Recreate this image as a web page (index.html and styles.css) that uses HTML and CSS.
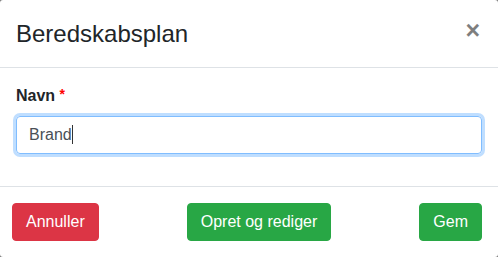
FILE: index.html
```html
<!DOCTYPE html>
<html lang="da">
<head>
    <meta charset="UTF-8">
    <meta name="viewport" content="width=device-width, initial-scale=1.0">
    <title>Beredskabsplan</title>
    <link rel="stylesheet" href="styles.css">
</head>
<body>
    <div class="modal-content">
        <div class="modal-header">
            <h4 class="modal-title">Beredskabsplan</h4>
            <button class="close" type="button">&times;</button>
        </div>

        <div class="modal-body">
            <div class="form-group">
                <label class="form-label">Navn <span class="required">*</span></label>
                <div class="form-control focused">Brand<span class="caret"></span></div>
            </div>
        </div>

        <div class="modal-footer">
            <button class="btn btn-danger">Annuller</button>
            <button class="btn btn-success">Opret og rediger</button>
            <button class="btn btn-success">Gem</button>
        </div>
    </div>
</body>
</html>
```

FILE: styles.css
```css
* {
    margin: 0;
    padding: 0;
    box-sizing: border-box;
}

html {
    background-color: #7a7a7a;
}

body {
    font-family: "Liberation Sans", Arial, sans-serif;
    color: #212529;
    width: 498px;
    height: 257px;
    overflow: hidden;
}

.modal-content {
    background-color: #fff;
    border-radius: 3px;
    height: 257px;
    display: flex;
    flex-direction: column;
}

.modal-header {
    display: flex;
    align-items: flex-start;
    padding: 16px;
    border-bottom: 1px solid #dee2e6;
}

.modal-title {
    font-size: 24px;
    font-weight: 500;
    line-height: 35px;
    flex: 1;
}

.close {
    background: none;
    border: none;
    font-family: "Liberation Sans", Arial, sans-serif;
    font-size: 25px;
    font-weight: 700;
    line-height: 1;
    color: #000;
    opacity: 0.5;
    margin-top: 2px;
    margin-right: 2px;
    cursor: pointer;
}

.modal-body {
    padding: 16px;
}

.form-group {
    margin-bottom: 16px;
}

.form-label {
    display: block;
    font-size: 16px;
    font-weight: 700;
    line-height: 24px;
    margin-bottom: 8px;
}

.required {
    color: #f00;
    font-size: 14px;
    line-height: 0;
    vertical-align: 2px;
}

.form-control {
    height: 38px;
    padding: 6px 12px;
    font-size: 16px;
    line-height: 24px;
    color: #495057;
    border: 1px solid #ced4da;
    border-radius: 4px;
}

.form-control.focused {
    border-color: #80bdff;
    box-shadow: 0 0 0 3px rgba(0, 123, 255, 0.25);
}

.caret {
    display: inline-block;
    width: 1px;
    height: 19px;
    background-color: #333;
    vertical-align: -4px;
}

.modal-footer {
    display: flex;
    justify-content: space-between;
    align-items: center;
    padding: 16px 16px 16px 12px;
    border-top: 1px solid #dee2e6;
}

.btn {
    font-family: "Liberation Sans", Arial, sans-serif;
    font-size: 16px;
    line-height: 24px;
    padding: 6px 13px;
    border: 1px solid transparent;
    border-radius: 4px;
    color: #fff;
    cursor: pointer;
}

.btn-danger {
    background-color: #dc3545;
    border-color: #dc3545;
}

.btn-success {
    background-color: #28a745;
    border-color: #28a745;
}
```
